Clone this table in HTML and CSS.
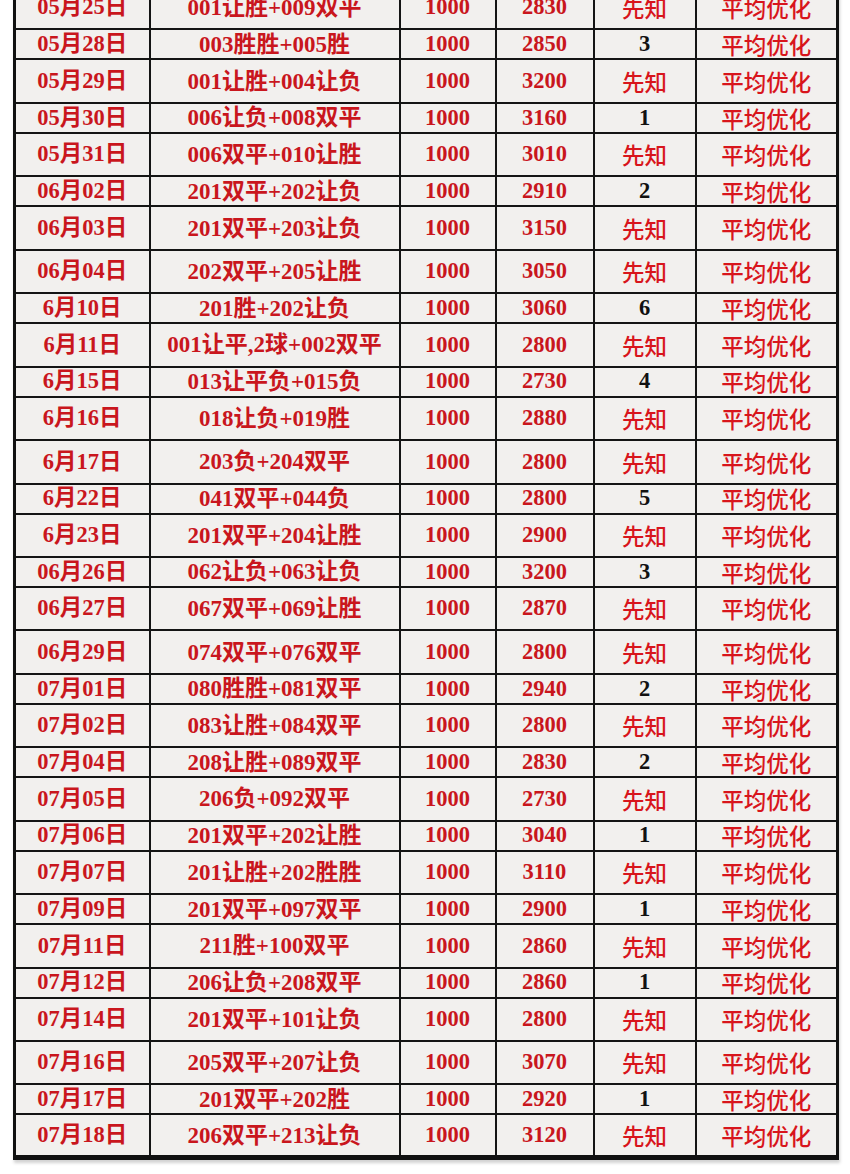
FILE: index.html
```html
<!DOCTYPE html>
<html lang="zh">
<head>
<meta charset="utf-8">
<link rel="stylesheet" href="styles.css">
</head>
<body>
<div class="page">
<table class="sheet">
<colgroup><col class="c1"><col class="c2"><col class="c3"><col class="c4"><col class="c5"><col class="c6"></colgroup>
<tbody>
<tr class="t"><td>05月25日</td><td class="m">001让胜+009双平</td><td>1000</td><td>2830</td><td class="k">先知</td><td class="o">平均优化</td></tr>
<tr class="s"><td>05月28日</td><td class="m">003胜胜+005胜</td><td>1000</td><td>2850</td><td class="n">3</td><td class="o">平均优化</td></tr>
<tr class="t"><td>05月29日</td><td class="m">001让胜+004让负</td><td>1000</td><td>3200</td><td class="k">先知</td><td class="o">平均优化</td></tr>
<tr class="s"><td>05月30日</td><td class="m">006让负+008双平</td><td>1000</td><td>3160</td><td class="n">1</td><td class="o">平均优化</td></tr>
<tr class="t"><td>05月31日</td><td class="m">006双平+010让胜</td><td>1000</td><td>3010</td><td class="k">先知</td><td class="o">平均优化</td></tr>
<tr class="s"><td>06月02日</td><td class="m">201双平+202让负</td><td>1000</td><td>2910</td><td class="n">2</td><td class="o">平均优化</td></tr>
<tr class="t"><td>06月03日</td><td class="m">201双平+203让负</td><td>1000</td><td>3150</td><td class="k">先知</td><td class="o">平均优化</td></tr>
<tr class="t"><td>06月04日</td><td class="m">202双平+205让胜</td><td>1000</td><td>3050</td><td class="k">先知</td><td class="o">平均优化</td></tr>
<tr class="s"><td>6月10日</td><td class="m">201胜+202让负</td><td>1000</td><td>3060</td><td class="n">6</td><td class="o">平均优化</td></tr>
<tr class="t"><td>6月11日</td><td class="m">001让平,2球+002双平</td><td>1000</td><td>2800</td><td class="k">先知</td><td class="o">平均优化</td></tr>
<tr class="s"><td>6月15日</td><td class="m">013让平负+015负</td><td>1000</td><td>2730</td><td class="n">4</td><td class="o">平均优化</td></tr>
<tr class="t"><td>6月16日</td><td class="m">018让负+019胜</td><td>1000</td><td>2880</td><td class="k">先知</td><td class="o">平均优化</td></tr>
<tr class="t"><td>6月17日</td><td class="m">203负+204双平</td><td>1000</td><td>2800</td><td class="k">先知</td><td class="o">平均优化</td></tr>
<tr class="s"><td>6月22日</td><td class="m">041双平+044负</td><td>1000</td><td>2800</td><td class="n">5</td><td class="o">平均优化</td></tr>
<tr class="t"><td>6月23日</td><td class="m">201双平+204让胜</td><td>1000</td><td>2900</td><td class="k">先知</td><td class="o">平均优化</td></tr>
<tr class="s"><td>06月26日</td><td class="m">062让负+063让负</td><td>1000</td><td>3200</td><td class="n">3</td><td class="o">平均优化</td></tr>
<tr class="t"><td>06月27日</td><td class="m">067双平+069让胜</td><td>1000</td><td>2870</td><td class="k">先知</td><td class="o">平均优化</td></tr>
<tr class="t"><td>06月29日</td><td class="m">074双平+076双平</td><td>1000</td><td>2800</td><td class="k">先知</td><td class="o">平均优化</td></tr>
<tr class="s"><td>07月01日</td><td class="m">080胜胜+081双平</td><td>1000</td><td>2940</td><td class="n">2</td><td class="o">平均优化</td></tr>
<tr class="t"><td>07月02日</td><td class="m">083让胜+084双平</td><td>1000</td><td>2800</td><td class="k">先知</td><td class="o">平均优化</td></tr>
<tr class="s"><td>07月04日</td><td class="m">208让胜+089双平</td><td>1000</td><td>2830</td><td class="n">2</td><td class="o">平均优化</td></tr>
<tr class="t"><td>07月05日</td><td class="m">206负+092双平</td><td>1000</td><td>2730</td><td class="k">先知</td><td class="o">平均优化</td></tr>
<tr class="s"><td>07月06日</td><td class="m">201双平+202让胜</td><td>1000</td><td>3040</td><td class="n">1</td><td class="o">平均优化</td></tr>
<tr class="t"><td>07月07日</td><td class="m">201让胜+202胜胜</td><td>1000</td><td>3110</td><td class="k">先知</td><td class="o">平均优化</td></tr>
<tr class="s"><td>07月09日</td><td class="m">201双平+097双平</td><td>1000</td><td>2900</td><td class="n">1</td><td class="o">平均优化</td></tr>
<tr class="t"><td>07月11日</td><td class="m">211胜+100双平</td><td>1000</td><td>2860</td><td class="k">先知</td><td class="o">平均优化</td></tr>
<tr class="s"><td>07月12日</td><td class="m">206让负+208双平</td><td>1000</td><td>2860</td><td class="n">1</td><td class="o">平均优化</td></tr>
<tr class="t"><td>07月14日</td><td class="m">201双平+101让负</td><td>1000</td><td>2800</td><td class="k">先知</td><td class="o">平均优化</td></tr>
<tr class="t"><td>07月16日</td><td class="m">205双平+207让负</td><td>1000</td><td>3070</td><td class="k">先知</td><td class="o">平均优化</td></tr>
<tr class="s"><td>07月17日</td><td class="m">201双平+202胜</td><td>1000</td><td>2920</td><td class="n">1</td><td class="o">平均优化</td></tr>
<tr class="t"><td>07月18日</td><td class="m">206双平+213让负</td><td>1000</td><td>3120</td><td class="k">先知</td><td class="o">平均优化</td></tr>
</tbody>
</table>
</div>
</body>
</html>
```
FILE: styles.css
```css
html, body {
  margin: 0;
  padding: 0;
  background: #ffffff;
}
.page {
  width: 850px;
  height: 1174px;
  overflow: hidden;
}
.sheet {
  margin-top: -15px;
  margin-left: 13px;
  width: 823px;
  table-layout: fixed;
  border-collapse: collapse;
  border-left: 3px solid #111;
  border-right: 3px solid #111;
  border-bottom: 5px solid #111;
  box-shadow: 1px 3px 3px rgba(0, 0, 0, 0.18);
  font-family: "Liberation Serif", "Noto Sans CJK SC", serif;
  font-size: 22.5px;
  font-weight: 700;
  color: #c9161d;
  background: #f2f0ee;
}
.c1 { width: 135px; }
.c2 { width: 250px; }
.c3 { width: 96px; }
.c4 { width: 98px; }
.c5 { width: 102px; }
.c6 { width: 142px; }
.sheet td {
  border: 2px solid #141414;
  text-align: center;
  vertical-align: middle;
  padding: 0;
  line-height: 1;
  white-space: nowrap;
}
.sheet tr.s { height: 30px; }
.sheet tr.t { height: 43.45px; }
.sheet td.m {
  font-size: 23px;
}
.sheet td.k,
.sheet td.o {
  font-family: "Noto Sans CJK SC", sans-serif;
  font-weight: 500;
  color: #d8151c;
  font-size: 22.5px;
}
.sheet td.n {
  color: #111111;
}
```
